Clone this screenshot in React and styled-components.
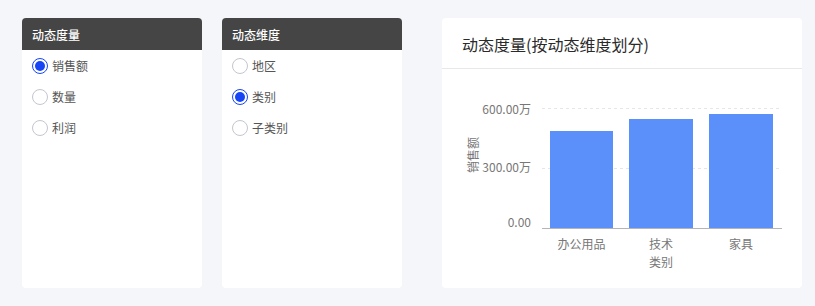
import React from "react";
import styled, { createGlobalStyle } from "styled-components";

const Global = createGlobalStyle`
  html, body { margin: 0; padding: 0; background: #f5f6fa; }
  body { font-family: "Noto Sans CJK SC", "Noto Sans", sans-serif; }
`;

const Page = styled.div`
  display: flex;
  align-items: flex-start;
  gap: 20px;
  padding: 18px 22px;
  width: 815px;
  height: 306px;
  box-sizing: border-box;
  background: #f5f6fa;
`;

const Panel = styled.div`
  flex: 0 0 180px;
  width: 180px;
  height: 270px;
  background: #fff;
  border-radius: 4px;
  overflow: hidden;
  display: flex;
  flex-direction: column;
`;

const PanelHeader = styled.div`
  height: 32px;
  background: #454545;
  color: #fff;
  font-size: 12px;
  font-weight: 500;
  display: flex;
  align-items: center;
  padding-left: 10px;
`;

const OptionList = styled.div`
  display: flex;
  flex-direction: column;
  padding-left: 10px;
`;

const Option = styled.label`
  height: 31px;
  display: flex;
  align-items: center;
  gap: 4px;
  font-size: 12px;
  color: #555;
  cursor: pointer;
`;

const RadioDot = styled.span`
  width: 16px;
  height: 16px;
  box-sizing: border-box;
  border-radius: 50%;
  border: 1px solid ${(p) => (p.$checked ? "#1745f5" : "#c4c6cf")};
  display: flex;
  align-items: center;
  justify-content: center;
  &::after {
    content: "";
    width: 10px;
    height: 10px;
    border-radius: 50%;
    background: ${(p) => (p.$checked ? "#1745f5" : "transparent")};
  }
`;

const ChartCard = styled.div`
  flex: 0 0 360px;
  margin-left: 20px;
  width: 360px;
  height: 270px;
  background: #fff;
  border-radius: 4px;
  display: flex;
  flex-direction: column;
`;

const ChartTitle = styled.div`
  height: 51px;
  border-bottom: 1px solid #e8e8e8;
  display: flex;
  align-items: center;
  padding: 1px 0 0 20px;
  box-sizing: border-box;
  font-size: 16px;
  font-weight: 400;
  color: #2a2a2a;
`;

const RadioPanel = ({ title, options, selected }) => (
  <Panel>
    <PanelHeader>{title}</PanelHeader>
    <OptionList>
      {options.map((o) => (
        <Option key={o}>
          <RadioDot $checked={o === selected} />
          {o}
        </Option>
      ))}
    </OptionList>
  </Panel>
);

const bars = [
  { label: "办公用品", x: 108, w: 63, top: 62 },
  { label: "技术", x: 187, w: 64, top: 50 },
  { label: "家具", x: 267, w: 64, top: 45 },
];

const Chart = () => (
  <svg width="360" height="218" viewBox="0 0 360 218">
    <g fontFamily='"Noto Sans CJK SC", sans-serif' fontSize="12" fill="#777">
      <line x1="100" x2="338" y1="39.5" y2="39.5" stroke="#e6e6e6" strokeDasharray="3 3" />
      <line x1="100" x2="338" y1="99.5" y2="99.5" stroke="#e6e6e6" strokeDasharray="3 3" />
      {bars.map((b) => (
        <rect key={b.label} x={b.x} y={b.top} width={b.w} height={159 - b.top} fill="#5b8ff9" />
      ))}
      <line x1="100" x2="340" y1="159.5" y2="159.5" stroke="#b5b5b5" />
      <text x="89" y="39" textAnchor="end" dominantBaseline="central">600.00万</text>
      <text x="89" y="97" textAnchor="end" dominantBaseline="central">300.00万</text>
      <text x="89" y="152" textAnchor="end" dominantBaseline="central">0.00</text>
      {bars.map((b) => (
        <text key={b.label} x={b.x + b.w / 2} y="174" textAnchor="middle" dominantBaseline="central">
          {b.label}
        </text>
      ))}
      <text x="219" y="192" textAnchor="middle" dominantBaseline="central">类别</text>
      <text
        x="30"
        y="86"
        textAnchor="middle"
        dominantBaseline="central"
        transform="rotate(-90 30 86)"
      >
        销售额
      </text>
    </g>
  </svg>
);

export default function App() {
  return (
    <>
      <Global />
      <Page>
        <RadioPanel title="动态度量" options={["销售额", "数量", "利润"]} selected="销售额" />
        <RadioPanel title="动态维度" options={["地区", "类别", "子类别"]} selected="类别" />
        <ChartCard>
          <ChartTitle>动态度量(按动态维度划分)</ChartTitle>
          <Chart />
        </ChartCard>
      </Page>
    </>
  );
}
